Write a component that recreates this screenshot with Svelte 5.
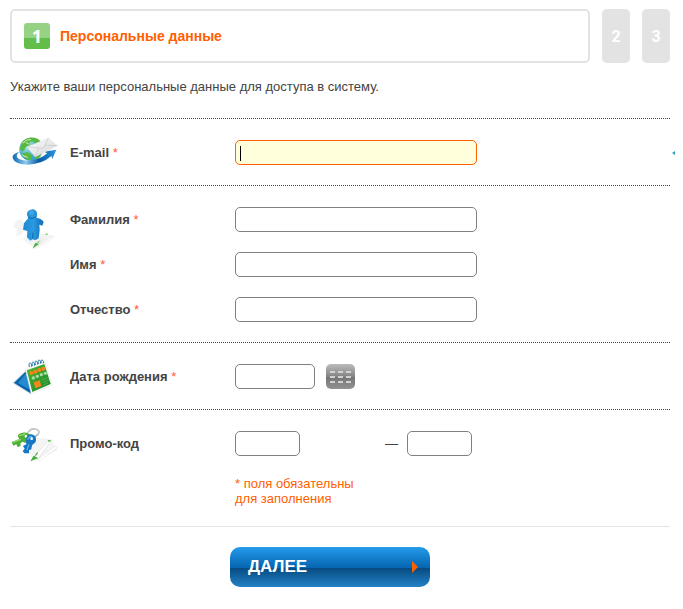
<script>
    import { onMount } from "svelte";

    let form = $state({
        email: "",
        lastName: "",
        firstName: "",
        middleName: "",
        birthDate: "",
        promoStart: "",
        promoEnd: "",
    });
    let active = $state("email");
    let emailInput;

    const names = [
        { key: "lastName", label: "Фамилия" },
        { key: "firstName", label: "Имя" },
        { key: "middleName", label: "Отчество" },
    ];

    const submit = (evt) => {
        evt.preventDefault();
    };

    onMount(() => {
        emailInput.focus();
    });
</script>

<main>
    <ol class="steps">
        <li class="step current">
            <span class="number">1</span>
            <h1>Персональные данные</h1>
        </li>
        <li class="step">2</li>
        <li class="step">3</li>
    </ol>

    <p class="intro">Укажите ваши персональные данные для доступа в систему.</p>

    <form onsubmit={submit}>
        <section>
            <svg class="icon" viewBox="15 30 150 150" aria-hidden="true">
                <defs>
                    <radialGradient id="globe" cx="35%" cy="35%">
                        <stop offset="0" stop-color="#b5e8ed" />
                        <stop offset="1" stop-color="#3aa6c4" />
                    </radialGradient>
                    <linearGradient id="swoosh">
                        <stop offset="0" stop-color="#0a65ae" />
                        <stop offset="0.3" stop-color="#8cc9ef" />
                        <stop offset="0.6" stop-color="#075aa5" />
                        <stop offset="1" stop-color="#2c98df" />
                    </linearGradient>
                    <linearGradient id="letter" x2="1" y2="1">
                        <stop offset="0" stop-color="#fff" />
                        <stop offset="1" stop-color="#d0d2d3" />
                    </linearGradient>
                </defs>
                <circle cx="78" cy="73" r="35" fill="url(#globe)" />
                <path d="M45 70Q48 43 73 38Q101 36 108 53L91 56 84 48 73 52 76 60 62 66 57 77 49 79ZM51 86L67 81 81 91 76 105 65 104ZM91 92L108 80 106 96 92 105Z" fill="#58b83f" />
                <path d="M53 55L65 45 78 44M52 91L68 97M62 52L73 58" stroke="#d5f2ae" stroke-width="3" fill="none" />
                <path d="M46 80Q20 85 23 99Q29 119 70 119Q112 117 139 93L142 102 154 74 117 80 127 85Q104 105 75 106Q42 108 36 96Q33 86 46 80Z" fill="url(#swoosh)" />
                <path d="M66 66L130 39 157 62 90 96Z" fill="url(#letter)" stroke="#dfe1e2" />
                <path d="M66 66L116 70 130 39M90 96L101 69M157 62L119 61" fill="none" stroke="#c4c7c9" stroke-width="2" />
            </svg>
            <div class="fields">
                <label for="email">E-mail <em>*</em></label>
                <div>
                    <input
                        id="email"
                        type="text"
                        class:active={active === "email" && !form.email}
                        bind:value={form.email}
                        bind:this={emailInput}
                        onfocus={() => (active = "email")}
                        onblur={() => (active = "")}
                    />
                </div>
            </div>
            <span class="next-mark"></span>
        </section>

        <section>
            <svg class="icon" viewBox="15 6 150 150" aria-hidden="true">
                <defs>
                    <linearGradient id="person">
                        <stop offset="0" stop-color="#1d8ad0" />
                        <stop offset="0.5" stop-color="#2b9ae0" />
                        <stop offset="1" stop-color="#0d6cb6" />
                    </linearGradient>
                    <linearGradient id="pen" x1="1" x2="0" y2="1">
                        <stop offset="0" stop-color="#fff" />
                        <stop offset="1" stop-color="#dbe0db" />
                    </linearGradient>
                </defs>
                <path d="M31 65L45 57 60 72 51 103 33 108 37 88 25 80Z" fill="#f3f3f3" />
                <path d="M52 118L80 96 150 108 91 146Z" fill="#f4f4f4" />
                <path d="M70 54Q63 45 67 36Q74 26 86 28Q98 33 96 46L94 53Q108 54 116 66L112 77 103 74 104 90 101 115 91 121 83 118 76 122 66 112 67 93 54 89 57 70Z" fill="url(#person)" />
                <path d="M70 52Q80 60 94 50M84 98L83 116" stroke="#0968a8" stroke-width="3" fill="none" />
                <circle cx="79" cy="38" r="7" fill="#3ea6e4" />
                <path d="M89 134L121 102 128 104 99 137Z" fill="url(#pen)" stroke="#c6ccc6" />
                <path d="M99 138L143 108 145 114 105 139Z" fill="#fff" stroke="#d2d2d2" />
                <path d="M83 146L91 128 101 132Z" fill="#43b336" />
                <path d="M122 103L128 102M97 129L103 124" stroke="#52b746" stroke-width="3" />
            </svg>
            <div class="fields">
                {#each names as field}
                    <label for={field.key}>{field.label} <em>*</em></label>
                    <div>
                        <input id={field.key} type="text" bind:value={form[field.key]} />
                    </div>
                {/each}
            </div>
        </section>

        <section>
            <svg class="icon" viewBox="15 27 150 150" aria-hidden="true">
                <defs>
                    <linearGradient id="page" x2="1" y2="1">
                        <stop offset="0" stop-color="#53b736" />
                        <stop offset="1" stop-color="#16852a" />
                    </linearGradient>
                </defs>
                <path d="M63 62L25 99 78 132 80 118Z" fill="#0865ad" stroke="#d5dce0" stroke-width="3" />
                <path d="M67 65L75 119 39 99Z" fill="#268bce" />
                <path d="M61 58L119 37 141 105 79 132Z" fill="#fff" stroke="#dfe4de" stroke-width="2" />
                <path d="M65 61L118 42 137 102 82 126Z" fill="url(#page)" />
                <path d="M73 51q-3-15 4-11q5 3 2 10M82 48q-3-15 4-11q5 3 2 10M91 45q-3-15 4-11q5 3 2 10M100 42q-3-15 4-11q5 3 2 10M109 39q-3-12 4-8q5 3 2 9" stroke="#2476a9" stroke-width="3" fill="none" />
                <g fill="#f7861a">
                    <circle cx="79" cy="69" r="6" />
                    <circle cx="91" cy="65" r="6" />
                    <circle cx="103" cy="60" r="6" />
                    <circle cx="115" cy="56" r="6" />
                    <path d="M86 97L104 91 109 108 91 115Z" />
                </g>
                <g fill="#a7dda1">
                    <circle cx="85" cy="84" r="5" />
                    <circle cx="97" cy="79" r="5" />
                    <circle cx="109" cy="74" r="5" />
                    <circle cx="121" cy="70" r="5" />
                </g>
                <path d="M110 91L128 83M113 98L131 90M115 105L130 98" stroke="#66b65d" stroke-width="2" />
            </svg>
            <div class="fields">
                <label for="birthDate">Дата рождения <em>*</em></label>
                <div class="date">
                    <input id="birthDate" type="text" bind:value={form.birthDate} />
                    <button type="button" class="calendar" aria-label="Календарь">
                        <svg viewBox="0 0 29 25">
                            <path d="M4 8h5M12 8h5M20 8h5M4 13h5M12 13h5M20 13h5M4 18h5M12 18h5M20 18h5" />
                        </svg>
                    </button>
                </div>
            </div>
        </section>

        <section>
            <svg class="icon" viewBox="15 18 150 150" aria-hidden="true">
                <path d="M71 52L139 57 158 91 91 123 61 86Z" fill="#f4f4f4" />
                <path d="M67 42Q75 24 91 27Q108 31 98 44L90 50" fill="none" stroke="#a9aeb1" stroke-width="5" />
                <path d="M67 42Q75 24 91 27Q108 31 98 44" fill="none" stroke="#eee" stroke-width="2" />
                <path d="M20 66L43 57 38 47Q46 36 64 38L80 46 78 61 62 69 53 65 46 70 47 78 38 81 34 73 25 77Z" fill="#4dae38" />
                <path d="M24 67L48 58M43 47L61 42" stroke="#91da65" stroke-width="4" />
                <circle cx="63" cy="49" r="4" fill="#fff" />
                <path d="M63 60Q64 42 80 43Q97 47 92 66L81 76 79 88 72 91 72 100 58 100 53 93 59 86 54 78 64 73Z" fill="#1677c4" />
                <path d="M68 59Q72 47 82 50M72 73L66 90" stroke="#52aee9" stroke-width="4" fill="none" />
                <circle cx="80" cy="56" r="4" fill="#fff" />
                <path d="M85 113L130 63 137 63 97 119Z" fill="#fff" stroke="#c2c8c2" />
                <path d="M97 119L151 78 158 82 105 122Z" fill="#fff" stroke="#cfcfcf" />
                <path d="M76 124L86 107 100 114Z" fill="#42ad34" />
                <path d="M91 107L98 98M129 63L137 62" stroke="#55b343" stroke-width="4" />
            </svg>
            <div class="fields">
                <label for="promoStart">Промо-код</label>
                <div class="promo">
                    <input id="promoStart" type="text" bind:value={form.promoStart} />
                    <span>—</span>
                    <input type="text" aria-label="Промо-код, вторая часть" bind:value={form.promoEnd} />
                </div>
                <p class="note">* поля обязательны<br />для заполнения</p>
            </div>
        </section>

        <footer>
            <button type="submit" class="submit">
                <span>ДАЛЕЕ</span>
                <svg viewBox="0 0 6 12" aria-hidden="true"><path d="M0 0L6 6 0 12Z" /></svg>
            </button>
        </footer>
    </form>
</main>

<style>
    :global(body) {
        margin: 0;
        background: #fff;
    }

    * {
        box-sizing: border-box;
    }

    main {
        padding: 9px 13px 22px 10px;
        font: 13px/15px "Liberation Sans", Arial, sans-serif;
        color: #444;
    }

    /* steps */
    .steps {
        display: flex;
        gap: 12px;
        margin: 0;
        padding: 0;
        list-style: none;
    }

    .step {
        display: flex;
        align-items: center;
        justify-content: center;
        width: 28px;
        height: 54px;
        border-radius: 5px;
        background: #e3e3e3;
        color: #fff;
        font-family: Roboto, Arial, sans-serif;
        font-size: 16px;
        font-weight: bold;
    }

    .current {
        flex: 1;
        justify-content: flex-start;
        gap: 10px;
        padding: 0 12px;
        border: 2px solid #e3e3e3;
        background: #fff;
    }

    .number {
        width: 26px;
        border-radius: 3px;
        background: linear-gradient(#95d283 58%, #62bd49 58%);
        font-family: "Open Sans", Arial, sans-serif;
        font-size: 18px;
        line-height: 26px;
        text-align: center;
    }

    h1 {
        margin: 0;
        color: #ff6000;
        font: bold 14px/18px "Liberation Sans", Arial, sans-serif;
    }

    .intro {
        margin: 16px 0 24px;
    }

    /* form */
    section {
        position: relative;
        display: flex;
        gap: 10px;
        padding: 21px 0 20px;
        border-top: 1px dotted #444;
    }

    .icon {
        flex: none;
        width: 50px;
        height: 50px;
        margin: -5px 0 -20px;
        overflow: visible;
    }

    .fields {
        display: grid;
        flex: 1;
        grid-template-columns: 165px 1fr;
        row-gap: 20px;
    }

    label {
        font-weight: bold;
        line-height: 25px;
    }

    em {
        color: #ff5a3c;
        font-style: normal;
        font-weight: normal;
    }

    input {
        display: block;
        width: 242px;
        height: 25px;
        padding: 0 5px;
        border: 1px solid #808080;
        border-radius: 5px;
        outline: none;
        background: #fff;
        font: inherit;
        color: #000;
    }

    input:focus {
        border-color: #ff6000;
        background: #ffffdc;
    }

    input.active {
        border-color: #ff6000;
        background: linear-gradient(#000, #000) 4px 5px / 1px 15px no-repeat #ffffdc;
        caret-color: transparent;
    }

    .next-mark {
        position: absolute;
        top: 32px;
        right: -5px;
        width: 3px;
        height: 4px;
        background: #2ba2bd;
        clip-path: polygon(0 50%, 100% 0, 100% 100%);
    }

    .date {
        display: flex;
        gap: 11px;
    }

    .date input {
        width: 80px;
    }

    .calendar {
        width: 29px;
        height: 25px;
        padding: 0;
        border: 0;
        border-radius: 5px;
        background: linear-gradient(#bbb, #858585 50%, #737373 50%, #929292);
    }

    .calendar svg {
        display: block;
        stroke: #d2d2d2;
        stroke-width: 2;
    }

    .promo {
        display: flex;
        align-items: center;
    }

    .promo input {
        width: 65px;
    }

    .promo span {
        width: 107px;
        padding-right: 9px;
        text-align: right;
    }

    .note {
        grid-column: 2;
        margin: 0;
        color: #ff6000;
    }

    footer {
        padding: 20px 0 0 220px;
        border-top: 1px solid #e3e3e3;
    }

    .submit {
        display: flex;
        align-items: center;
        justify-content: space-between;
        width: 200px;
        height: 40px;
        padding: 0 12px 0 18px;
        border: 0;
        border-radius: 10px;
        background: linear-gradient(#259bea, #0565b1 52%, #064a80 52%, #2382c7);
        color: #fff;
        font: bold 17px/20px "Liberation Sans", Arial, sans-serif;
    }

    .submit svg {
        width: 6px;
        height: 12px;
        fill: #ff6000;
    }
</style>
